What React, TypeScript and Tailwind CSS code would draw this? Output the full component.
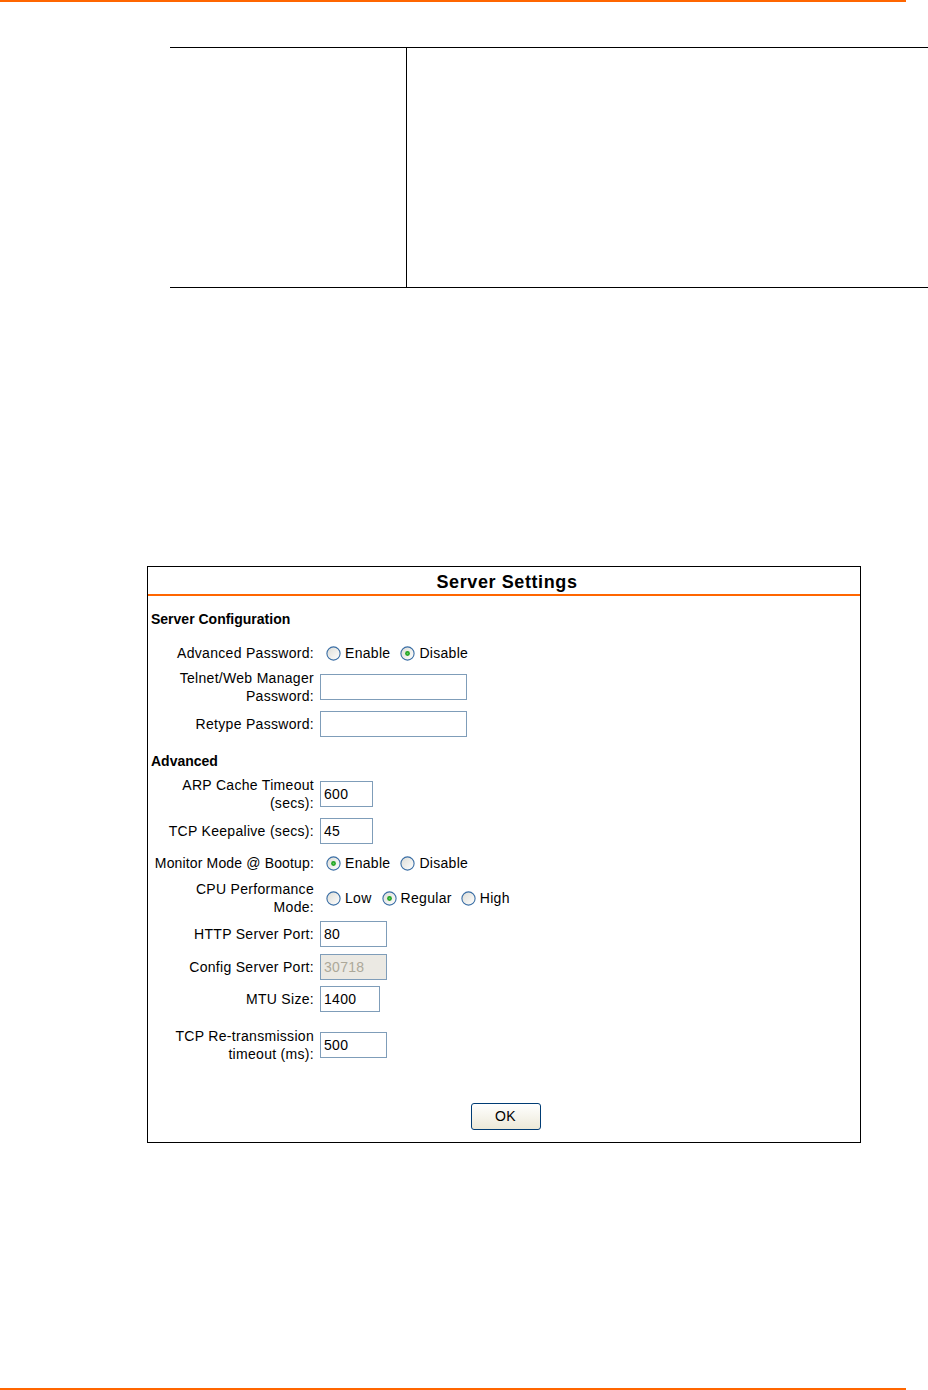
import React from "react";

const font = { fontFamily: '"Liberation Sans", Arial, sans-serif' };

function Radio({ checked }: { checked?: boolean }) {
  return (
    <svg width="15" height="15" viewBox="0 0 15 15" className="shrink-0">
      <defs>
        <linearGradient id="rg" x1="0" y1="0" x2="1" y2="1">
          <stop offset="0" stopColor="#dcdcd6" />
          <stop offset="1" stopColor="#ffffff" />
        </linearGradient>
      </defs>
      <circle cx="7.5" cy="7.5" r="6.6" fill="url(#rg)" stroke="#3a6ea5" strokeWidth="1.1" />
      {checked && <circle cx="7.5" cy="7.5" r="2.4" fill="#21a121" />}
      {checked && <circle cx="7.5" cy="7.5" r="1" fill="#5fd05f" />}
    </svg>
  );
}

function RadioOpt({ label, checked, ml }: { label: string; checked?: boolean; ml: string }) {
  return (
    <div className={`flex items-center ${ml}`}>
      <Radio checked={checked} />
      <span className="ml-[4px]">{label}</span>
    </div>
  );
}

function Input({ w, value, disabled }: { w: string; value?: string; disabled?: boolean }) {
  return (
    <div
      className={`${w} h-[26px] border border-[#7f9db9] flex items-center pl-[3px] ${
        disabled ? "bg-[#ebe9e3] text-[#aca899]" : "bg-white text-black"
      }`}
    >
      {value}
    </div>
  );
}

function Row({
  label,
  mt,
  h,
  children,
}: {
  label: React.ReactNode;
  mt: string;
  h: string;
  children: React.ReactNode;
}) {
  return (
    <div className={`flex items-center ${mt} ${h}`}>
      <div className="w-[163px] text-right leading-[18px] whitespace-nowrap">{label}</div>
      <div className="ml-[6px] flex items-center">{children}</div>
    </div>
  );
}

export default function App() {
  return (
    <div className="w-[928px] h-[1390px] bg-white flex flex-col text-black" style={font}>
      <div className="h-[2px] w-[906px] bg-[#ff6600]" />

      <div className="mt-[45px] ml-[170px] h-[241px] border-t border-b border-black flex">
        <div className="w-[237px] border-r border-black" />
        <div className="flex-1" />
      </div>

      <div className="mt-[278px] ml-[147px] w-[714px] border border-black flex flex-col text-[14px] tracking-[0.3px]">
        <div className="h-[29px] border-b-2 border-[#ff6600] flex items-center justify-center text-[18px] font-bold tracking-[0.6px] pt-[4px] pl-[6px]">
          Server Settings
        </div>
        <div className="pl-[3px] flex flex-col">
          <div className="mt-[14px] h-[18px] leading-[18px] font-bold tracking-normal">Server Configuration</div>

          <Row label="Advanced Password:" mt="mt-[13px]" h="h-[24px]">
            <RadioOpt label="Enable" ml="ml-[6px]" />
            <RadioOpt label="Disable" checked ml="ml-[10px]" />
          </Row>
          <Row
            label={
              <>
                Telnet/Web Manager
                <br />
                Password:
              </>
            }
            mt="mt-[4px]"
            h="h-[36px]"
          >
            <Input w="w-[147px]" />
          </Row>
          <Row label="Retype Password:" mt="mt-[6px]" h="h-[26px]">
            <Input w="w-[147px]" />
          </Row>

          <div className="mt-[15px] h-[18px] leading-[18px] font-bold tracking-normal">Advanced</div>

          <Row
            label={
              <>
                ARP Cache Timeout
                <br />
                (secs):
              </>
            }
            mt="mt-[6px]"
            h="h-[36px]"
          >
            <Input w="w-[53px]" value="600" />
          </Row>
          <Row label="TCP Keepalive (secs):" mt="mt-[6px]" h="h-[26px]">
            <Input w="w-[53px]" value="45" />
          </Row>
          <Row
            label={<span className="tracking-[0.15px]">Monitor Mode @ Bootup:</span>}
            mt="mt-[7px]"
            h="h-[24px]"
          >
            <RadioOpt label="Enable" checked ml="ml-[6px]" />
            <RadioOpt label="Disable" ml="ml-[10px]" />
          </Row>
          <Row
            label={
              <>
                CPU Performance
                <br />
                Mode:
              </>
            }
            mt="mt-[5px]"
            h="h-[36px]"
          >
            <RadioOpt label="Low" ml="ml-[6px]" />
            <RadioOpt label="Regular" checked ml="ml-[10px]" />
            <RadioOpt label="High" ml="ml-[9px]" />
          </Row>
          <Row label="HTTP Server Port:" mt="mt-[5px]" h="h-[26px]">
            <Input w="w-[67px]" value="80" />
          </Row>
          <Row label="Config Server Port:" mt="mt-[7px]" h="h-[26px]">
            <Input w="w-[67px]" value="30718" disabled />
          </Row>
          <Row label="MTU Size:" mt="mt-[6px]" h="h-[26px]">
            <Input w="w-[60px]" value="1400" />
          </Row>
          <Row
            label={
              <>
                TCP Re-transmission
                <br />
                timeout (ms):
              </>
            }
            mt="mt-[15px]"
            h="h-[36px]"
          >
            <Input w="w-[67px]" value="500" />
          </Row>
        </div>

        <div className="mt-[40px] mb-[12px] flex justify-center">
          <button className="w-[70px] h-[27px] rounded-[3px] border border-[#003c74] bg-gradient-to-b from-white to-[#ece9d8] text-[14px] flex items-center justify-center ml-[3px]">
            OK
          </button>
        </div>
      </div>

      <div className="mt-auto h-[2px] w-[906px] bg-[#ff6600]" />
    </div>
  );
}
